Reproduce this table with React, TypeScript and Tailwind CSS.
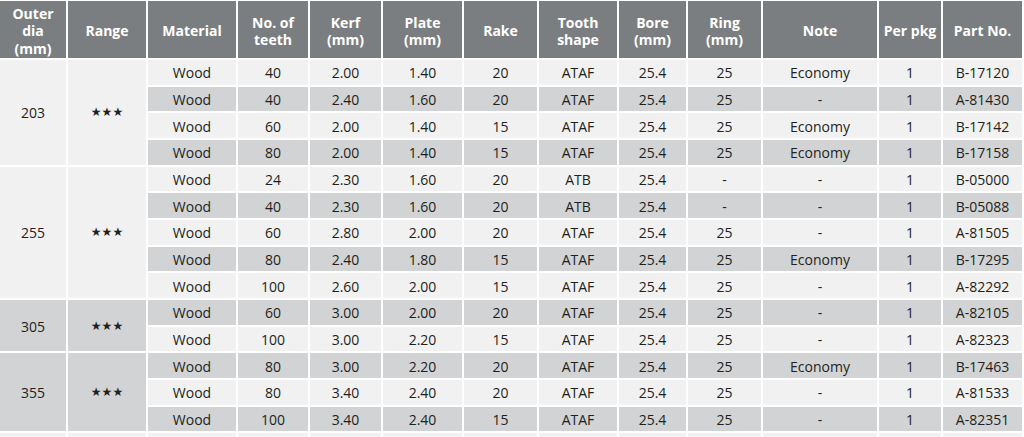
import React from 'react';

const LIGHT = 'bg-[#f1f1f1]';
const DARK = 'bg-[#d1d3d4]';

const headers = [
  ['Outer', 'dia', '(mm)'],
  ['Range'],
  ['Material'],
  ['No. of', 'teeth'],
  ['Kerf', '(mm)'],
  ['Plate', '(mm)'],
  ['Rake'],
  ['Tooth', 'shape'],
  ['Bore', '(mm)'],
  ['Ring', '(mm)'],
  ['Note'],
  ['Per pkg'],
  ['Part No.'],
];

type Group = { dia: string; span: string; tone: string; rows: string[][] };

const groups: Group[] = [
  {
    dia: '203',
    span: 'row-span-4',
    tone: LIGHT,
    rows: [
      ['Wood', '40', '2.00', '1.40', '20', 'ATAF', '25.4', '25', 'Economy', '1', 'B-17120'],
      ['Wood', '40', '2.40', '1.60', '20', 'ATAF', '25.4', '25', '-', '1', 'A-81430'],
      ['Wood', '60', '2.00', '1.40', '15', 'ATAF', '25.4', '25', 'Economy', '1', 'B-17142'],
      ['Wood', '80', '2.00', '1.40', '15', 'ATAF', '25.4', '25', 'Economy', '1', 'B-17158'],
    ],
  },
  {
    dia: '255',
    span: 'row-span-5',
    tone: LIGHT,
    rows: [
      ['Wood', '24', '2.30', '1.60', '20', 'ATB', '25.4', '-', '-', '1', 'B-05000'],
      ['Wood', '40', '2.30', '1.60', '20', 'ATB', '25.4', '-', '-', '1', 'B-05088'],
      ['Wood', '60', '2.80', '2.00', '20', 'ATAF', '25.4', '25', '-', '1', 'A-81505'],
      ['Wood', '80', '2.40', '1.80', '15', 'ATAF', '25.4', '25', 'Economy', '1', 'B-17295'],
      ['Wood', '100', '2.60', '2.00', '15', 'ATAF', '25.4', '25', '-', '1', 'A-82292'],
    ],
  },
  {
    dia: '305',
    span: 'row-span-2',
    tone: DARK,
    rows: [
      ['Wood', '60', '3.00', '2.00', '20', 'ATAF', '25.4', '25', '-', '1', 'A-82105'],
      ['Wood', '100', '3.00', '2.20', '15', 'ATAF', '25.4', '25', '-', '1', 'A-82323'],
    ],
  },
  {
    dia: '355',
    span: 'row-span-3',
    tone: DARK,
    rows: [
      ['Wood', '80', '3.00', '2.20', '20', 'ATAF', '25.4', '25', 'Economy', '1', 'B-17463'],
      ['Wood', '80', '3.40', '2.40', '20', 'ATAF', '25.4', '25', '-', '1', 'A-81533'],
      ['Wood', '100', '3.40', '2.40', '15', 'ATAF', '25.4', '25', '-', '1', 'A-82351'],
    ],
  },
];

export default function App() {
  let rowIndex = 0;

  return (
    <div className="w-[1024px] h-[437px] overflow-hidden bg-white">
      <div
        className="grid gap-[2px] bg-white pt-px pr-[2px] text-[#231f20] grid-cols-[66px_78px_88px_70px_71px_79px_73px_78px_67px_73px_114px_62px_79px] grid-rows-[57px] auto-rows-[24.67px]"
        style={{ fontFamily: '"Open Sans", "Noto Sans", sans-serif' }}
      >
        {headers.map((lines, i) => (
          <div
            key={i}
            className="bg-[#7b7e80] flex flex-col items-center justify-center pt-[3px] text-white font-bold text-[14px] leading-[17.5px] text-center"
          >
            {lines.map((l) => (
              <span key={l}>{l}</span>
            ))}
          </div>
        ))}

        {groups.map((g) => (
          <React.Fragment key={g.dia}>
            <div className={`${g.span} ${g.tone} flex items-center justify-center pt-[2px] text-[14px] leading-none`}>
              {g.dia}
            </div>
            <div
              className={`${g.span} ${g.tone} flex items-center justify-center text-[12px] leading-none`}
              style={{ fontFamily: '"DejaVu Sans", sans-serif' }}
            >
              ★★★
            </div>
            {g.rows.map((row) => {
              const tone = rowIndex++ % 2 === 0 ? LIGHT : DARK;
              return row.map((cell, ci) => (
                <div
                  key={`${rowIndex}-${ci}`}
                  className={`${tone} flex items-center justify-center pt-[2px] text-[14px] leading-none`}
                >
                  {cell}
                </div>
              ));
            })}
          </React.Fragment>
        ))}

        {/* next group, cut off at the bottom */}
        {headers.map((_, i) => (
          <div key={`tail-${i}`} className={LIGHT} />
        ))}
      </div>
    </div>
  );
}
